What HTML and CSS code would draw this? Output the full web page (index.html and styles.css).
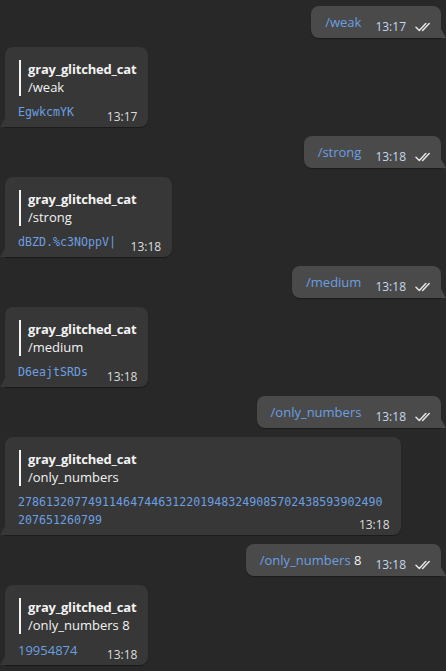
FILE: index.html
```html
<!DOCTYPE html>
<html>
<head>
<meta charset="utf-8">
<link rel="stylesheet" href="styles.css">
</head>
<body>
<div class="chat">
  <div class="msg out">
    <span class="text link">/weak</span>
    <span class="meta"><span class="time">13:17</span><svg class="checks" viewBox="0 0 18 10"><path d="M1 5.2 L4.3 8.5 L10.8 1.5 M7.6 8.5 L14.2 1.5"/></svg></span>
  </div>
  <div class="msg in">
    <div class="quote"><div class="name">gray_glitched_cat</div><div class="cmd">/weak</div></div>
    <div class="code">EgwkcmYK<span class="spacer"></span></div>
    <span class="time in-time">13:17</span>
  </div>

  <div class="msg out">
    <span class="text link">/strong</span>
    <span class="meta"><span class="time">13:18</span><svg class="checks" viewBox="0 0 18 10"><path d="M1 5.2 L4.3 8.5 L10.8 1.5 M7.6 8.5 L14.2 1.5"/></svg></span>
  </div>
  <div class="msg in">
    <div class="quote"><div class="name">gray_glitched_cat</div><div class="cmd">/strong</div></div>
    <div class="code">dBZD.%c3NOppV|<span class="spacer"></span></div>
    <span class="time in-time">13:18</span>
  </div>

  <div class="msg out">
    <span class="text link">/medium</span>
    <span class="meta"><span class="time">13:18</span><svg class="checks" viewBox="0 0 18 10"><path d="M1 5.2 L4.3 8.5 L10.8 1.5 M7.6 8.5 L14.2 1.5"/></svg></span>
  </div>
  <div class="msg in">
    <div class="quote"><div class="name">gray_glitched_cat</div><div class="cmd">/medium</div></div>
    <div class="code">D6eajtSRDs<span class="spacer"></span></div>
    <span class="time in-time">13:18</span>
  </div>

  <div class="msg out">
    <span class="text link">/only_numbers</span>
    <span class="meta"><span class="time">13:18</span><svg class="checks" viewBox="0 0 18 10"><path d="M1 5.2 L4.3 8.5 L10.8 1.5 M7.6 8.5 L14.2 1.5"/></svg></span>
  </div>
  <div class="msg in">
    <div class="quote"><div class="name">gray_glitched_cat</div><div class="cmd">/only_numbers</div></div>
    <div class="code">2786132077491146474463122019483249085702438593902490207651260799<span class="spacer"></span></div>
    <span class="time in-time">13:18</span>
  </div>

  <div class="msg out">
    <span class="text"><span class="link">/only_numbers</span> 8</span>
    <span class="meta"><span class="time">13:18</span><svg class="checks" viewBox="0 0 18 10"><path d="M1 5.2 L4.3 8.5 L10.8 1.5 M7.6 8.5 L14.2 1.5"/></svg></span>
  </div>
  <div class="msg in">
    <div class="quote"><div class="name">gray_glitched_cat</div><div class="cmd">/only_numbers 8</div></div>
    <div class="code num">19954874<span class="spacer"></span></div>
    <span class="time in-time">13:18</span>
  </div>
</div>
</body>
</html>
```

FILE: styles.css
```css
html, body {
  margin: 0;
  padding: 0;
}
body {
  width: 446px;
  height: 671px;
  overflow: hidden;
  background: #282828;
  font-family: "Open Sans", "Noto Sans", sans-serif;
  font-size: 13px;
  color: #f2f2f2;
}
.chat {
  display: flex;
  flex-direction: column;
  gap: 9px;
  padding: 6px 5px 0 5px;
}
.msg {
  position: relative;
  border-radius: 8px;
  box-shadow: 0 1px 1px rgba(0, 0, 0, 0.35);
}
.msg.out {
  align-self: flex-end;
  display: flex;
  align-items: flex-end;
  background: #4a4a4a;
  padding: 7px 8px 4px 14px;
  border-bottom-right-radius: 0;
}
.msg.out::after {
  content: "";
  position: absolute;
  right: -5px;
  bottom: 0;
  width: 5px;
  height: 9px;
  background: #4a4a4a;
  clip-path: polygon(0 0, 0 100%, 100% 100%);
}
.msg.in {
  align-self: flex-start;
  background: #373737;
  padding: 13px 12px 3px 13px;
  border-bottom-left-radius: 0;
}
.msg.in::after {
  content: "";
  position: absolute;
  left: -5px;
  bottom: 0;
  width: 5px;
  height: 9px;
  background: #373737;
  clip-path: polygon(100% 0, 100% 100%, 0 100%);
}
.text {
  line-height: 18px;
  margin-bottom: 3px;
  white-space: nowrap;
}
.link {
  color: #6c9fe0;
}
.meta {
  display: flex;
  align-items: center;
  margin-left: 14px;
}
.time {
  font-size: 12px;
  line-height: 14px;
  color: #c6d8ec;
}
.checks {
  width: 18px;
  height: 10px;
  margin-left: 9px;
  fill: none;
  stroke: #e4e4e4;
  stroke-width: 1.5;
  stroke-linecap: round;
  stroke-linejoin: round;
}
.quote {
  border-left: 2px solid #f4f4f4;
  padding-left: 7px;
  margin-left: 1px;
  line-height: 18px;
}
.name {
  font-weight: 700;
  letter-spacing: -0.18px;
  white-space: nowrap;
}
.cmd {
  white-space: nowrap;
}
.code {
  margin-top: 7px;
  padding-bottom: 3px;
  max-width: 370.5px;
  font-family: "DejaVu Sans Mono", "Liberation Mono", monospace;
  font-size: 11.65px;
  line-height: 18px;
  color: #6c9fe0;
  word-break: break-all;
}
.code.num {
  font-family: "Open Sans", sans-serif;
  font-size: 13px;
}
.spacer {
  display: inline-block;
  width: 44px;
  height: 1px;
}
.in-time {
  position: absolute;
  right: 11px;
  bottom: 3px;
  color: #dedede;
}
```
